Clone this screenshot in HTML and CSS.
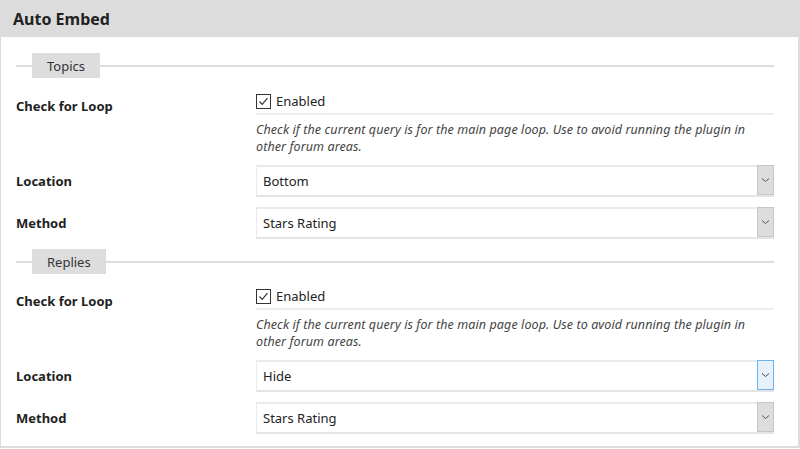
FILE: index.html
```html
<!DOCTYPE html>
<html lang="en">
<head>
    <meta charset="UTF-8">
    <title>Auto Embed</title>
    <link rel="stylesheet" href="styles.css">
</head>
<body>
    <div class="panel">
        <div class="panel-title">Auto Embed</div>
        <div class="panel-body">

            <!-- Topics -->
            <div class="group">
                <div class="legend-row"><span class="legend">Topics</span></div>
                <div class="row row-check">
                    <div class="label">Check for Loop</div>
                    <div class="field">
                        <label class="check-line">
                            <span class="checkbox">
                                <svg width="13" height="13" viewBox="0 0 13 13"><polyline points="2.5,6.5 5.2,9.3 10.5,3.2" fill="none" stroke="#333" stroke-width="1.2"/></svg>
                            </span>
                            Enabled
                        </label>
                        <div class="desc">Check if the current query is for the main page loop. Use to avoid running the plugin in other forum areas.</div>
                    </div>
                </div>
                <div class="row row-select">
                    <div class="label">Location</div>
                    <div class="select">
                        <span class="select-value">Bottom</span>
                        <span class="select-arrow"><svg width="9" height="6" viewBox="0 0 9 6"><polyline points="1,1.5 4.5,4.5 8,1.5" fill="none" stroke="#555" stroke-width="1"/></svg></span>
                    </div>
                </div>
                <div class="row row-select">
                    <div class="label">Method</div>
                    <div class="select">
                        <span class="select-value">Stars Rating</span>
                        <span class="select-arrow"><svg width="9" height="6" viewBox="0 0 9 6"><polyline points="1,1.5 4.5,4.5 8,1.5" fill="none" stroke="#555" stroke-width="1"/></svg></span>
                    </div>
                </div>
            </div>

            <!-- Replies -->
            <div class="group">
                <div class="legend-row"><span class="legend">Replies</span></div>
                <div class="row row-check">
                    <div class="label">Check for Loop</div>
                    <div class="field">
                        <label class="check-line">
                            <span class="checkbox">
                                <svg width="13" height="13" viewBox="0 0 13 13"><polyline points="2.5,6.5 5.2,9.3 10.5,3.2" fill="none" stroke="#333" stroke-width="1.2"/></svg>
                            </span>
                            Enabled
                        </label>
                        <div class="desc">Check if the current query is for the main page loop. Use to avoid running the plugin in other forum areas.</div>
                    </div>
                </div>
                <div class="row row-select">
                    <div class="label">Location</div>
                    <div class="select">
                        <span class="select-value">Hide</span>
                        <span class="select-arrow hover"><svg width="9" height="6" viewBox="0 0 9 6"><polyline points="1,1.5 4.5,4.5 8,1.5" fill="none" stroke="#444" stroke-width="1"/></svg></span>
                    </div>
                </div>
                <div class="row row-select">
                    <div class="label">Method</div>
                    <div class="select">
                        <span class="select-value">Stars Rating</span>
                        <span class="select-arrow"><svg width="9" height="6" viewBox="0 0 9 6"><polyline points="1,1.5 4.5,4.5 8,1.5" fill="none" stroke="#555" stroke-width="1"/></svg></span>
                    </div>
                </div>
            </div>

        </div>
    </div>
</body>
</html>
```

FILE: styles.css
```css
* {
    margin: 0;
    padding: 0;
    box-sizing: border-box;
}

body {
    background: #fff;
    font-family: "Noto Sans", "Open Sans", sans-serif;
    font-size: 13px;
    color: #222;
}

.panel {
    width: 800px;
    border: 1px solid #ddd;
    border-top: 0;
    border-right-width: 2px;
    border-bottom-width: 2px;
}

.panel-title {
    height: 37px;
    background: #dcdcdc;
    padding: 2px 0 0 12px;
    font-size: 16px;
    font-weight: bold;
    line-height: 35px;
    color: #222;
}

.panel-body {
    padding: 0 24px 12px 15px;
}

.group {
    margin-top: 10px;
}

.group:first-child {
    margin-top: 16px;
}

/* legend with line */
.legend-row {
    display: flex;
    align-items: center;
    height: 25px;
}

.legend-row::before,
.legend-row::after {
    content: "";
    height: 2px;
    background: #ddd;
}

.legend-row::before { width: 16px; }
.legend-row::after { flex: 1; }

.legend {
    background: #ddd;
    height: 25px;
    line-height: 26px;
    padding: 0 15px;
    color: #333;
}

/* rows */
.row {
    display: grid;
    grid-template-columns: 240px 1fr;
}

.label {
    font-weight: bold;
    color: #222;
}

.row-check {
    margin-top: 13px;
}

.group + .group .row-check {
    margin-top: 12px;
}

.row-check .label {
    padding-top: 6px;
}

.row-select {
    margin-top: 10px;
    align-items: center;
}

.check-line {
    display: flex;
    align-items: center;
    gap: 5px;
    height: 24px;
    border-bottom: 2px solid #eee;
    padding-bottom: 2px;
}

.checkbox {
    width: 15px;
    height: 15px;
    border: 1px solid #333;
    display: flex;
    align-items: center;
    justify-content: center;
    background: #fff;
}

.desc {
    font-size: 12.5px;
    letter-spacing: 0.1px;
    font-style: italic;
    line-height: 17px;
    color: #444;
    padding-top: 6px;
    padding-right: 20px;
}

/* select */
.select {
    display: flex;
    height: 32px;
    border: 1px solid #eaeaea;
    border-top-width: 2px;
    border-bottom: 2px solid #e4e4e4;
    border-right: 0;
    background: #fff;
}

.select-value {
    flex: 1;
    padding-left: 6px;
    line-height: 28px;
    color: #222;
}

.select-arrow {
    width: 17px;
    margin-top: -2px;
    background: #dddddd;
    border: 1px solid #c6c6c6;
    display: flex;
    align-items: center;
    justify-content: center;
}

.select-arrow.hover {
    background: #e5f1fb;
    border-color: #6fb0ee;
}
```
